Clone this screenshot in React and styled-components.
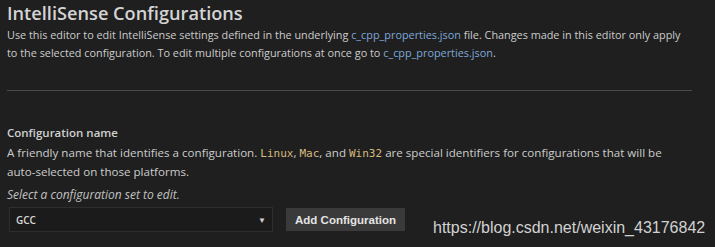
import React from "react";
import styled, { createGlobalStyle } from "styled-components";

const Global = createGlobalStyle`
  html, body { margin: 0; padding: 0; background: #1e1e1e; }
  body { font-family: "Open Sans", "Noto Sans", sans-serif; color: #cccccc; }
`;

const Page = styled.div`
  position: relative;
  width: 715px;
  height: 247px;
  overflow: hidden;
  background: #1f1f1f;
  padding: 0 23px 0 7px;
  box-sizing: border-box;
`;

const Title = styled.h1`
  margin: 0;
  padding-top: 0;
  font-size: 18.2px;
  font-weight: 600;
  line-height: 26px;
  color: #d4d4d4;
`;

const Para = styled.p`
  margin: 0;
  font-size: ${(p) => p.$size || 11}px;
  line-height: 18px;
  color: #cccccc;
  white-space: nowrap;
`;

const Link = styled.a`
  color: #7ea8d8;
  text-decoration: none;
`;

const Divider = styled.hr`
  margin: 28px 0 0 0;
  border: none;
  border-top: 1px solid #4a4a4a;
`;

const Section = styled.section`
  margin-top: 33px;
`;

const SectionTitle = styled.h2`
  margin: 0 0 2px 0;
  font-size: 11.5px;
  font-weight: 600;
  line-height: 18px;
  color: #d0d0d0;
`;

const Code = styled.code`
  font-family: "DejaVu Sans Mono", "Liberation Mono", monospace;
  font-size: 11px;
  color: #d7ba7d;
`;

const Hint = styled.p`
  margin: 5px 0 0 0;
  font-size: 12px;
  font-style: italic;
  line-height: 18px;
  color: #c2c2c2;
`;

const Controls = styled.div`
  display: flex;
  align-items: center;
  gap: 13px;
  margin-top: 3px;
  padding-left: 2px;
`;

const Select = styled.div`
  width: 264px;
  height: 25px;
  box-sizing: border-box;
  display: flex;
  align-items: center;
  justify-content: space-between;
  padding: 0 6px 0 6px;
  background: #1b1b1b;
  border: 1px solid #2e2e2e;
  font-size: 10px;
  font-weight: 600;
  color: #d8d8d8;
`;

const Caret = styled.span`
  font-size: 8px;
  color: #d0d0d0;
`;

const Button = styled.button`
  width: 119px;
  height: 23px;
  border: none;
  background: #3a3a3a;
  color: #e4e4e4;
  font-family: "Liberation Sans", Arial, sans-serif;
  font-size: 11.5px;
  font-weight: 700;
  padding: 0;
`;

const Watermark = styled.div`
  position: absolute;
  left: 433px;
  top: 218px;
  font-family: "Liberation Sans", Arial, sans-serif;
  font-size: 16px;
  color: #d2d2d2;
  line-height: 20px;
  white-space: nowrap;
`;

export default function App() {
  return (
    <>
      <Global />
      <Page>
        <Title>IntelliSense Configurations</Title>
        <Para $size={10.85}>
          Use this editor to edit IntelliSense settings defined in the underlying{" "}
          <Link>c_cpp_properties.json</Link> file. Changes made in this editor only apply
          <br />
          to the selected configuration. To edit multiple configurations at once go to{" "}
          <Link>c_cpp_properties.json</Link>.
        </Para>
        <Divider />
        <Section>
          <SectionTitle>Configuration name</SectionTitle>
          <Para $size={11.6}>
            A friendly name that identifies a configuration. <Code>Linux</Code>,{" "}
            <Code>Mac</Code>, and <Code>Win32</Code> are special identifiers for
            configurations that will be
            <br />
            auto-selected on those platforms.
          </Para>
          <Hint>Select a configuration set to edit.</Hint>
          <Controls>
            <Select>
              <span>GCC</span>
              <Caret>▼</Caret>
            </Select>
            <Button>Add Configuration</Button>
          </Controls>
        </Section>
        <Watermark>https://blog.csdn.net/weixin_43176842</Watermark>
      </Page>
    </>
  );
}
